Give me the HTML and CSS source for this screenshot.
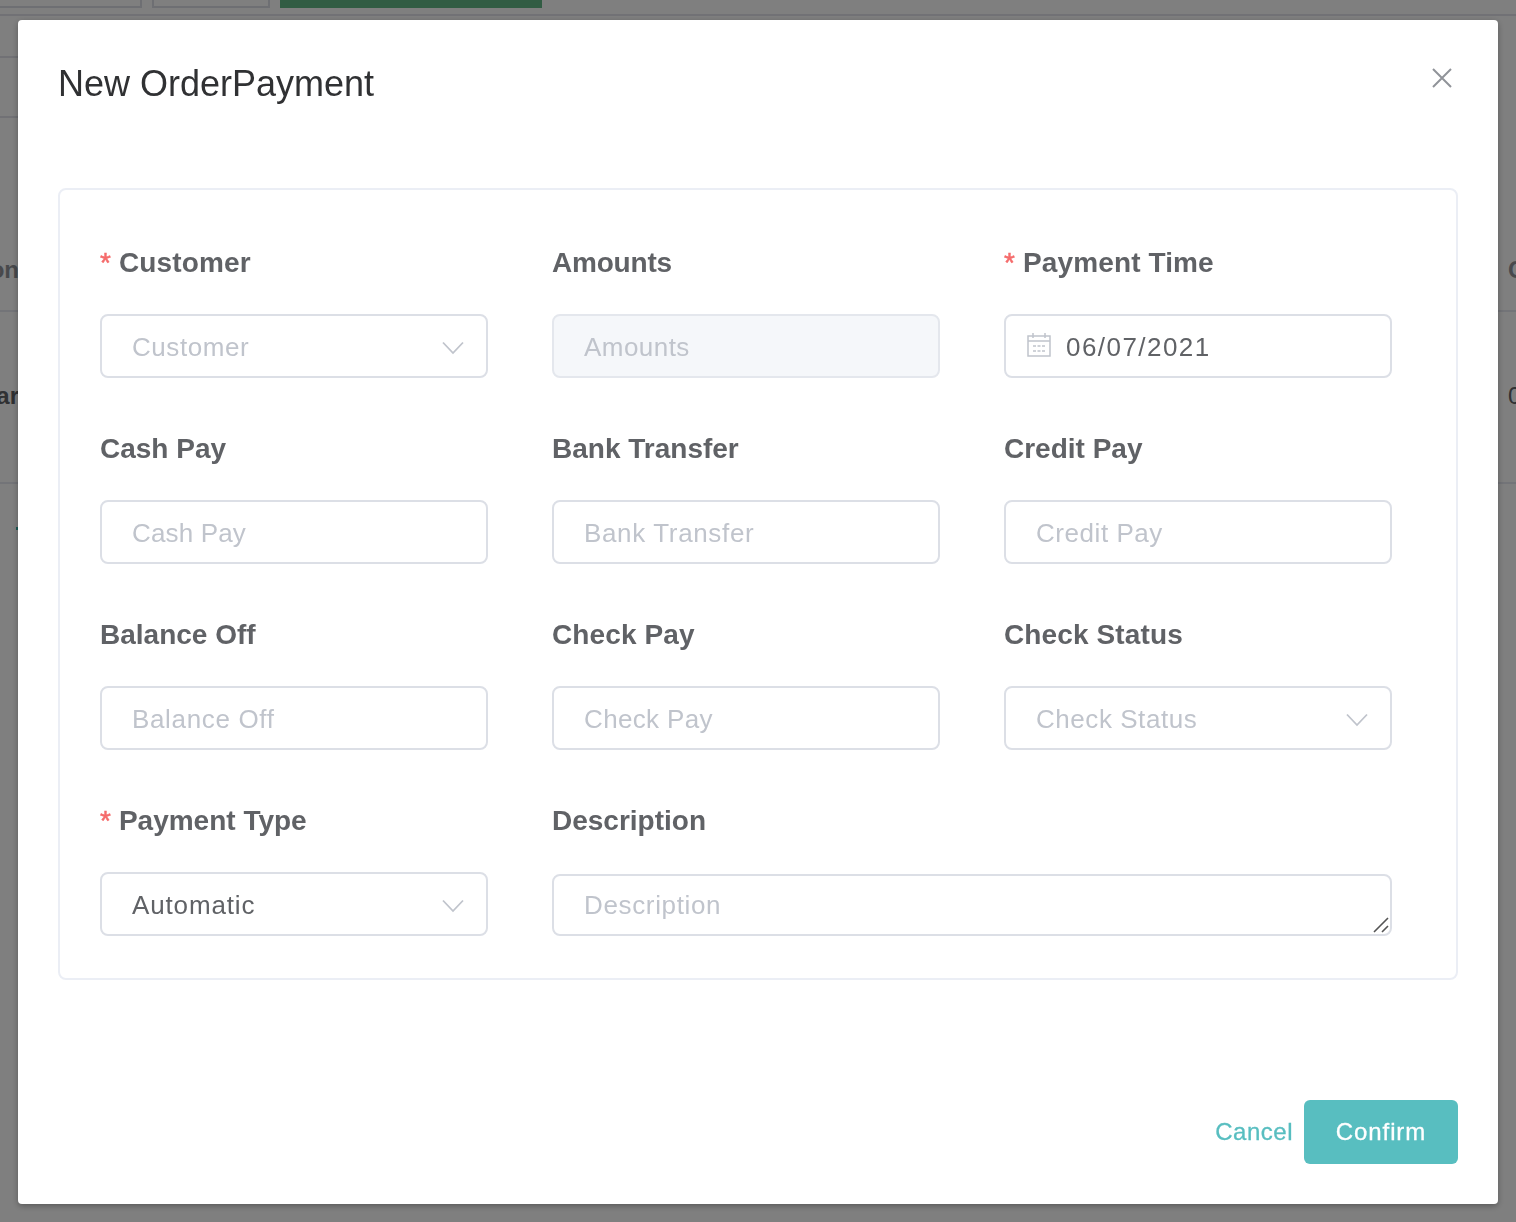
FILE: index.html
```html
<!DOCTYPE html>
<html lang="en">
<head>
<meta charset="utf-8">
<title>New OrderPayment</title>
<link rel="stylesheet" href="styles.css">
</head>
<body>
<div class="page">
  <div class="toolbar">
    <span class="tool tool-first"></span>
    <span class="tool tool-second"></span>
    <span class="tool-primary"></span>
  </div>
  <div class="filters"><div class="filter-top"></div><div class="filter-row"></div></div>
  <div class="table-row table-head"><span class="cell-start">on</span><span class="cell-end">C</span></div>
  <div class="table-row table-body"><span class="cell-start">ar</span><span class="cell-end amount">0</span></div>
  <div class="page-mark"></div>
</div>

<div class="overlay">
  <section class="dialog">
    <header class="dialog-header">
      <h1 class="title">New OrderPayment</h1>
      <svg class="close" viewBox="0 0 20 20"><path d="M1 1L19 19M19 1L1 19"/></svg>
    </header>

    <div class="card">
      <div class="field">
        <label class="label t-required"><span class="star">*</span>Customer</label>
        <div class="control"><span class="placeholder t-customer">Customer</span><svg class="chevron" viewBox="0 0 22 14"><path d="M1 1.5L11 12L21 1.5"/></svg></div>
      </div>
      <div class="field">
        <label class="label t-amounts-label">Amounts</label>
        <div class="control disabled"><span class="placeholder t-amounts">Amounts</span></div>
      </div>
      <div class="field">
        <label class="label t-required"><span class="star">*</span>Payment Time</label>
        <div class="control date">
          <svg class="calendar" viewBox="0 0 24 24"><path d="M1 3H23V23H1ZM1 8H23M6 0V5M18 0V5"/><path class="dots" d="M6 13H18M6 18H18"/></svg>
          <span class="value t-date">06/07/2021</span>
        </div>
      </div>

      <div class="field">
        <label class="label">Cash Pay</label>
        <div class="control"><span class="placeholder t-cash">Cash Pay</span></div>
      </div>
      <div class="field">
        <label class="label">Bank Transfer</label>
        <div class="control"><span class="placeholder t-bank">Bank Transfer</span></div>
      </div>
      <div class="field">
        <label class="label">Credit Pay</label>
        <div class="control"><span class="placeholder t-credit">Credit Pay</span></div>
      </div>

      <div class="field">
        <label class="label">Balance Off</label>
        <div class="control"><span class="placeholder t-balance">Balance Off</span></div>
      </div>
      <div class="field">
        <label class="label t-check-label">Check Pay</label>
        <div class="control"><span class="placeholder t-check">Check Pay</span></div>
      </div>
      <div class="field">
        <label class="label t-check-label">Check Status</label>
        <div class="control"><span class="placeholder t-status">Check Status</span><svg class="chevron" viewBox="0 0 22 14"><path d="M1 1.5L11 12L21 1.5"/></svg></div>
      </div>

      <div class="field">
        <label class="label"><span class="star">*</span>Payment Type</label>
        <div class="control"><span class="value t-auto">Automatic</span><svg class="chevron" viewBox="0 0 22 14"><path d="M1 1.5L11 12L21 1.5"/></svg></div>
      </div>
      <div class="field wide">
        <label class="label">Description</label>
        <div class="control area"><span class="placeholder t-desc">Description</span><svg class="resizer" viewBox="0 0 16 16"><path d="M1 15L15 1M9 15L15 9"/></svg></div>
      </div>
    </div>

    <footer class="dialog-footer">
      <span class="cancel">Cancel</span>
      <span class="confirm">Confirm</span>
    </footer>
  </section>
</div>
</body>
</html>
```

FILE: styles.css
```css
* { box-sizing: border-box; }
body {
  margin: 0;
  height: 1222px;
  overflow: hidden;
  background: #fff;
  font-family: "Liberation Sans", Arial, sans-serif;
}
.page { height: 1222px; }
.toolbar {
  display: flex;
  height: 16px;
  border-bottom: 2px solid #e2e3ea;
}
.tool { height: 8px; border: 2px solid #dcdfe6; border-top: 0; }
.tool-first { width: 142px; border-left: 0; }
.tool-second { width: 118px; margin-left: 10px; }
.tool-primary { width: 262px; height: 8px; margin-left: 10px; background: #62b887; }
.filters { width: 60px; }
.filter-top { height: 42px; border-bottom: 2px solid #e2e3ea; }
.filter-row { height: 60px; border-bottom: 2px solid #e2e3ea; }
.table-row {
  display: flex;
  justify-content: space-between;
  align-items: center;
  border-bottom: 2px solid #e6e8f0;
  font-size: 24px;
  font-weight: 700;
}
.table-head { height: 84px; margin-top: 110px; padding-top: 2px; color: #909399; }
.table-body { height: 172px; padding-bottom: 2px; color: #606266; }
.cell-start { width: 19px; display: flex; justify-content: flex-end; }
.cell-end { width: 8px; overflow: hidden; }
.amount { font-weight: 400; }
.page-mark { width: 3px; height: 3px; margin: 43px 0 0 16px; background: #35b5ac; }

.overlay {
  position: fixed;
  inset: 0;
  padding: 20px 18px 18px;
  background: rgba(0, 0, 0, 0.5);
}
.dialog {
  display: flex;
  flex-direction: column;
  height: 1184px;
  padding: 40px;
  border-radius: 4px;
  background: #fff;
  box-shadow: 0 2px 6px rgba(0, 0, 0, 0.3);
}
.dialog-header {
  display: flex;
  justify-content: space-between;
  height: 128px;
}
.title {
  margin: 0;
  font-size: 36px;
  line-height: 48px;
  font-weight: 400;
  color: #303133;
}
.close { width: 20px; height: 20px; margin: 8px 6px 0 0; stroke: #909399; stroke-width: 2; fill: none; }

.card {
  display: grid;
  grid-template-columns: repeat(3, 388px);
  column-gap: 64px;
  row-gap: 37px;
  height: 792px;
  padding: 39px 40px 42px;
  border: 2px solid #ebeef5;
  border-radius: 8px;
  align-content: start;
}
.field { display: flex; flex-direction: column; justify-content: space-between; height: 149px; }
.wide { grid-column: span 2; }
.label { font-size: 28px; line-height: 68px; font-weight: 700; color: #606266; white-space: nowrap; }
.star { margin-right: 8px; font-weight: 400; color: #f56c6c; -webkit-text-stroke: 0.5px #f56c6c; }
.control {
  display: flex;
  align-items: center;
  height: 64px;
  padding: 2px 22px 0 30px;
  border: 2px solid #dcdfe6;
  border-radius: 8px;
  font-size: 26px;
  white-space: nowrap;
}
.disabled { background: #f5f7fa; border-color: #e4e7ed; }
.placeholder { color: #c0c4cc; }
.value { color: #606266; }
.chevron { width: 22px; height: 14px; margin: 1px 0 0 auto; stroke: #c0c4cc; stroke-width: 1.8; fill: none; }
.date { padding-left: 21px; }
.calendar { width: 24px; height: 24px; margin: -5px 15px 0 0; stroke: #c0c4cc; stroke-width: 1.5; fill: none; }
.calendar .dots { stroke-dasharray: 3 1.5; }
.area { height: 62px; padding: 0 1px 0 30px; }
.resizer { width: 16px; height: 16px; margin: 40px 0 0 auto; stroke: #555; stroke-width: 1.6; fill: none; }

.t-customer, .t-credit, .t-status { letter-spacing: 0.55px; }
.t-amounts { letter-spacing: 0.45px; }
.t-cash { letter-spacing: 0.15px; }
.t-bank, .t-desc, .t-balance { letter-spacing: 0.65px; }
.t-check { letter-spacing: 0.35px; }
.t-auto { letter-spacing: 0.85px; }
.t-date { letter-spacing: 1.45px; }
.t-required, .t-check-label { letter-spacing: 0.12px; }
.t-amounts-label { letter-spacing: -0.2px; }

.dialog-footer {
  display: flex;
  justify-content: flex-end;
  align-items: center;
  margin-top: auto;
  font-size: 24px;
}
.cancel { margin-right: 11px; letter-spacing: 0.5px; color: #58bec0; -webkit-text-stroke: 0.3px #58bec0; }
.confirm {
  width: 154px;
  height: 64px;
  border-radius: 6px;
  background: #58bec0;
  color: #fff;
  line-height: 64px;
  text-align: center;
  letter-spacing: 0.9px;
  -webkit-text-stroke: 0.3px #fff;
}
```
